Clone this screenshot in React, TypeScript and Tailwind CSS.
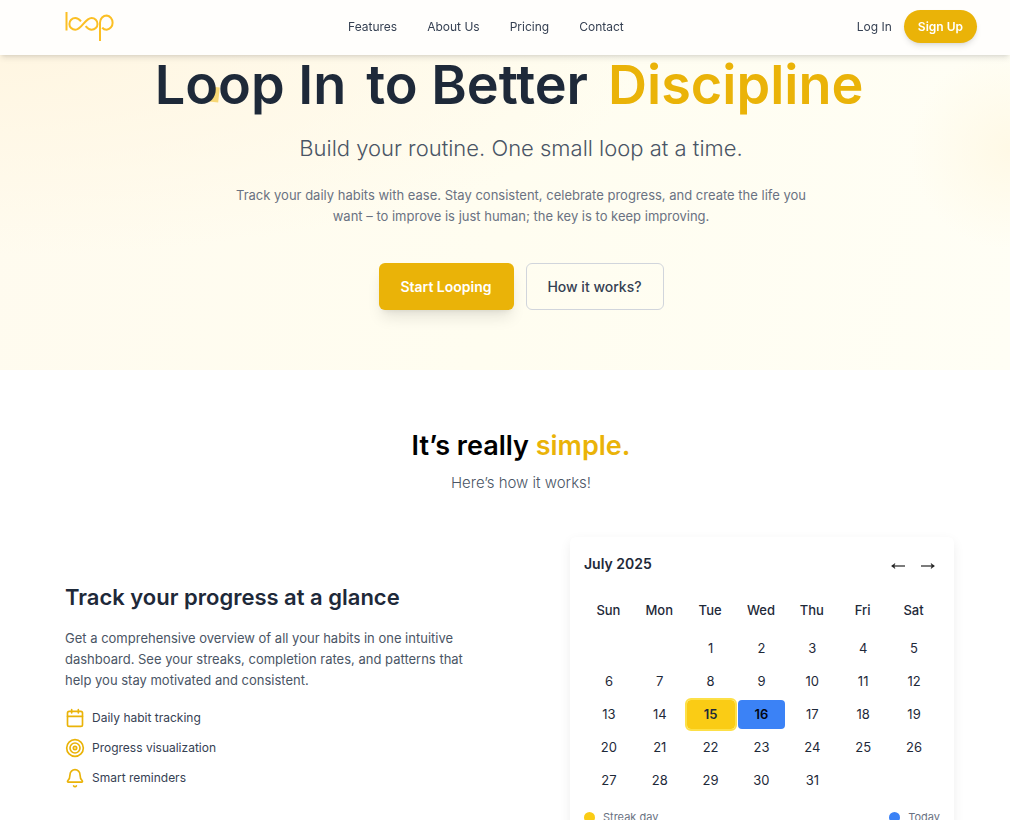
import type { ReactNode } from "react";

const navLinks = ["Features", "About Us", "Pricing", "Contact"];
const weekdays = ["Sun", "Mon", "Tue", "Wed", "Thu", "Fri", "Sat"];
const STREAK_DAY = 15;
const TODAY = 16;

// July 2025 starts on a Tuesday.
const weeks: (number | null)[][] = Array.from({ length: 5 }, (_, week) =>
  Array.from({ length: 7 }, (_, day) => {
    const date = week * 7 + day - 1;
    return date >= 1 && date <= 31 ? date : null;
  }),
);

function Logo() {
  return (
    <svg width="50" height="30" viewBox="0 0 50 30" fill="none" stroke="#fbbf24" strokeWidth="2" aria-hidden="true">
      <path d="M1.500 0V18.500" />
      <path d="M16 9.300C14.200 7.200 12.400 6 10.300 6A5.900 5.900 0 0 0 10.300 17.800C16.700 17.800 20 6 26.600 6A5.900 5.900 0 0 1 26.600 17.800C24.200 17.800 22.400 16.200 20.600 14.100" />
      <path d="M35 29V10.500A6.700 7.300 0 0 1 41.700 3.500A6.700 7.200 0 0 1 41.700 17.800C39.700 17.800 38.200 17 37.200 15.600" />
    </svg>
  );
}

function Icon({ children }: { children: ReactNode }) {
  return (
    <svg
      className="size-5 shrink-0 text-[#eab308]"
      viewBox="0 0 24 24"
      fill="none"
      stroke="currentColor"
      strokeWidth="2"
      strokeLinecap="round"
      strokeLinejoin="round"
      aria-hidden="true"
    >
      {children}
    </svg>
  );
}

const features = [
  {
    label: "Daily habit tracking",
    icon: (
      <Icon>
        <rect x="3" y="4" width="18" height="18" rx="2" />
        <path d="M8 2v4M16 2v4M3 10h18" />
      </Icon>
    ),
  },
  {
    label: "Progress visualization",
    icon: (
      <Icon>
        <circle cx="12" cy="12" r="10" />
        <circle cx="12" cy="12" r="6" />
        <circle cx="12" cy="12" r="2" />
      </Icon>
    ),
  },
  {
    label: "Smart reminders",
    icon: (
      <Icon>
        <path d="M10.3 21.5a2 2 0 0 0 3.4 0" />
        <path d="M3.3 15.3A1 1 0 0 0 4 17h16a1 1 0 0 0 .7-1.7C19.4 14 18 12.5 18 8A6 6 0 0 0 6 8c0 4.500-1.400 6-2.700 7.300" />
      </Icon>
    ),
  },
];

function Header() {
  return (
    <header className="sticky top-0 z-10 flex h-[55px] items-center justify-between bg-[#fffefc] pr-[33px] pb-[2px] pl-[65px] shadow-md">
      <a href="#home" aria-label="loop">
        <Logo />
      </a>
      <nav className="flex gap-[30px] text-[12px] text-gray-700">
        {navLinks.map((link) => (
          <a key={link} href="#features">
            {link}
          </a>
        ))}
      </nav>
      <div className="flex items-center gap-3 text-[12px]">
        <a href="#login" className="text-gray-700">
          Log In
        </a>
        <button className="h-[33px] rounded-full bg-[#eab308] px-[14px] font-semibold text-white shadow-md">Sign Up</button>
      </div>
    </header>
  );
}

function Hero() {
  return (
    <section className="bg-[radial-gradient(circle_at_100%_30%,#fff9e6_0,#fff9e600_100px),radial-gradient(ellipse_at_0%_0%,#fff6e2_0,#fffbeb00_45%),linear-gradient(100deg,#fffbef,#fffdf0_50%,#fffef5)] pr-[33px] pb-[60px] pl-[65px] text-center">
      <h1 className="relative -ml-6 flex justify-center gap-5 text-[54px] leading-[60px] font-semibold text-gray-800">
        <span className="absolute top-8 left-1/2 -ml-[299px] h-[15px] w-[9px] rotate-6 bg-[#f7d775]" />
        <span className="relative">Loop In</span>
        <span className="relative">to Better</span>
        <span className="relative text-[#eab308]">Discipline</span>
      </h1>
      <p className="mt-[17px] text-[22px] leading-[32px] font-light text-gray-600">Build your routine. One small loop at a time.</p>
      <p className="mx-auto mt-[21px] max-w-[590px] text-[13px] leading-[21px] text-gray-500">
        Track your daily habits with ease. Stay consistent, celebrate progress, and create the life you want – to improve is just
        human; the key is to keep improving.
      </p>
      <div className="mt-9 flex justify-center gap-3 text-[14px]">
        <button className="h-[47px] w-[135px] rounded-md bg-[#eab308] font-semibold text-white shadow-lg">Start Looping</button>
        <button className="h-[47px] w-[138px] rounded-md border border-gray-300 font-medium text-gray-700">How it works?</button>
      </div>
    </section>
  );
}

function dayStyle(day: number | null) {
  if (day === STREAK_DAY) return "rounded bg-[#facc15] font-semibold outline-2 outline-[#fde047]";
  if (day === TODAY) return "rounded bg-[#3b82f6] font-semibold text-gray-950";
  return "";
}

function Calendar() {
  return (
    <div className="rounded-md px-[14px] pt-[13px] pb-6 shadow-[0_4px_12px_rgba(0,0,0,0.07)]">
      <div className="flex items-center justify-between">
        <h4 className="text-[14px] leading-7 font-semibold text-gray-800">July 2025</h4>
        <div className="flex gap-[14px] pt-1 pr-1">
          <button aria-label="Previous month">
            <svg width="16" height="10" viewBox="0 0 16 10" fill="none" stroke="#222" strokeWidth="1.200">
              <path d="M15 5H2" />
              <path d="M5 2.500 1.500 5 5 7.500 4 5Z" fill="#222" strokeWidth="0.500" />
            </svg>
          </button>
          <button aria-label="Next month">
            <svg width="16" height="10" viewBox="0 0 16 10" fill="none" stroke="#222" strokeWidth="1.200">
              <path d="M1 5h13" />
              <path d="M11 2.500 14.500 5 11 7.500 12 5Z" fill="#222" strokeWidth="0.500" />
            </svg>
          </button>
        </div>
      </div>
      <table className="mt-3 w-full table-fixed text-center text-[13px] text-gray-800">
        <thead>
          <tr className="h-[42px]">
            {weekdays.map((day) => (
              <th key={day} className="pr-[2px] font-medium">
                {day}
              </th>
            ))}
          </tr>
        </thead>
        <tbody>
          {weeks.map((week, index) => (
            <tr key={index} className="h-[33px]">
              {week.map((day, column) => (
                <td key={column} className="pr-[2px] pl-px">
                  <div className={`leading-[29px] ${dayStyle(day)}`}>{day}</div>
                </td>
              ))}
            </tr>
          ))}
        </tbody>
      </table>
      <div className="mt-3 flex justify-between text-[11px] leading-4 text-gray-500">
        <span className="flex items-center gap-2">
          <span className="size-[11px] rounded-full bg-[#facc15]" />
          Streak day
        </span>
        <span className="flex items-center gap-2">
          <span className="size-[11px] rounded-full bg-[#3b82f6]" />
          Today
        </span>
      </div>
    </div>
  );
}

export default function App() {
  return (
    <div className="h-screen overflow-hidden bg-white font-['Inter',sans-serif]">
      <Header />
      <main>
        <Hero />
        <section className="pt-[58px] pr-[33px] pl-[65px]">
          <h2 className="text-center text-[27px] leading-[36px] font-semibold text-black">
            It’s really <span className="text-[#eab308]">simple.</span>
          </h2>
          <p className="mt-2 text-center text-[15px] leading-[22px] font-light text-gray-600">Here’s how it works!</p>
          <div className="mt-[43px] grid grid-cols-[minmax(0,1fr)_384px] gap-[96px] pr-[23px]">
            <div className="pt-[43px]">
              <h3 className="text-[22px] leading-[34px] font-semibold text-gray-800">Track your progress at a glance</h3>
              <p className="mt-[14px] text-[13px] leading-[21px] text-gray-600">
                Get a comprehensive overview of all your habits in one intuitive dashboard. See your streaks, completion rates, and
                patterns that help you stay motivated and consistent.
              </p>
              <ul className="mt-[17px] flex flex-col gap-[10px] text-[12px] leading-5 text-gray-700">
                {features.map(({ label, icon }) => (
                  <li key={label} className="flex items-center gap-[7px]">
                    {icon}
                    {label}
                  </li>
                ))}
              </ul>
            </div>
            <Calendar />
          </div>
        </section>
      </main>
    </div>
  );
}
